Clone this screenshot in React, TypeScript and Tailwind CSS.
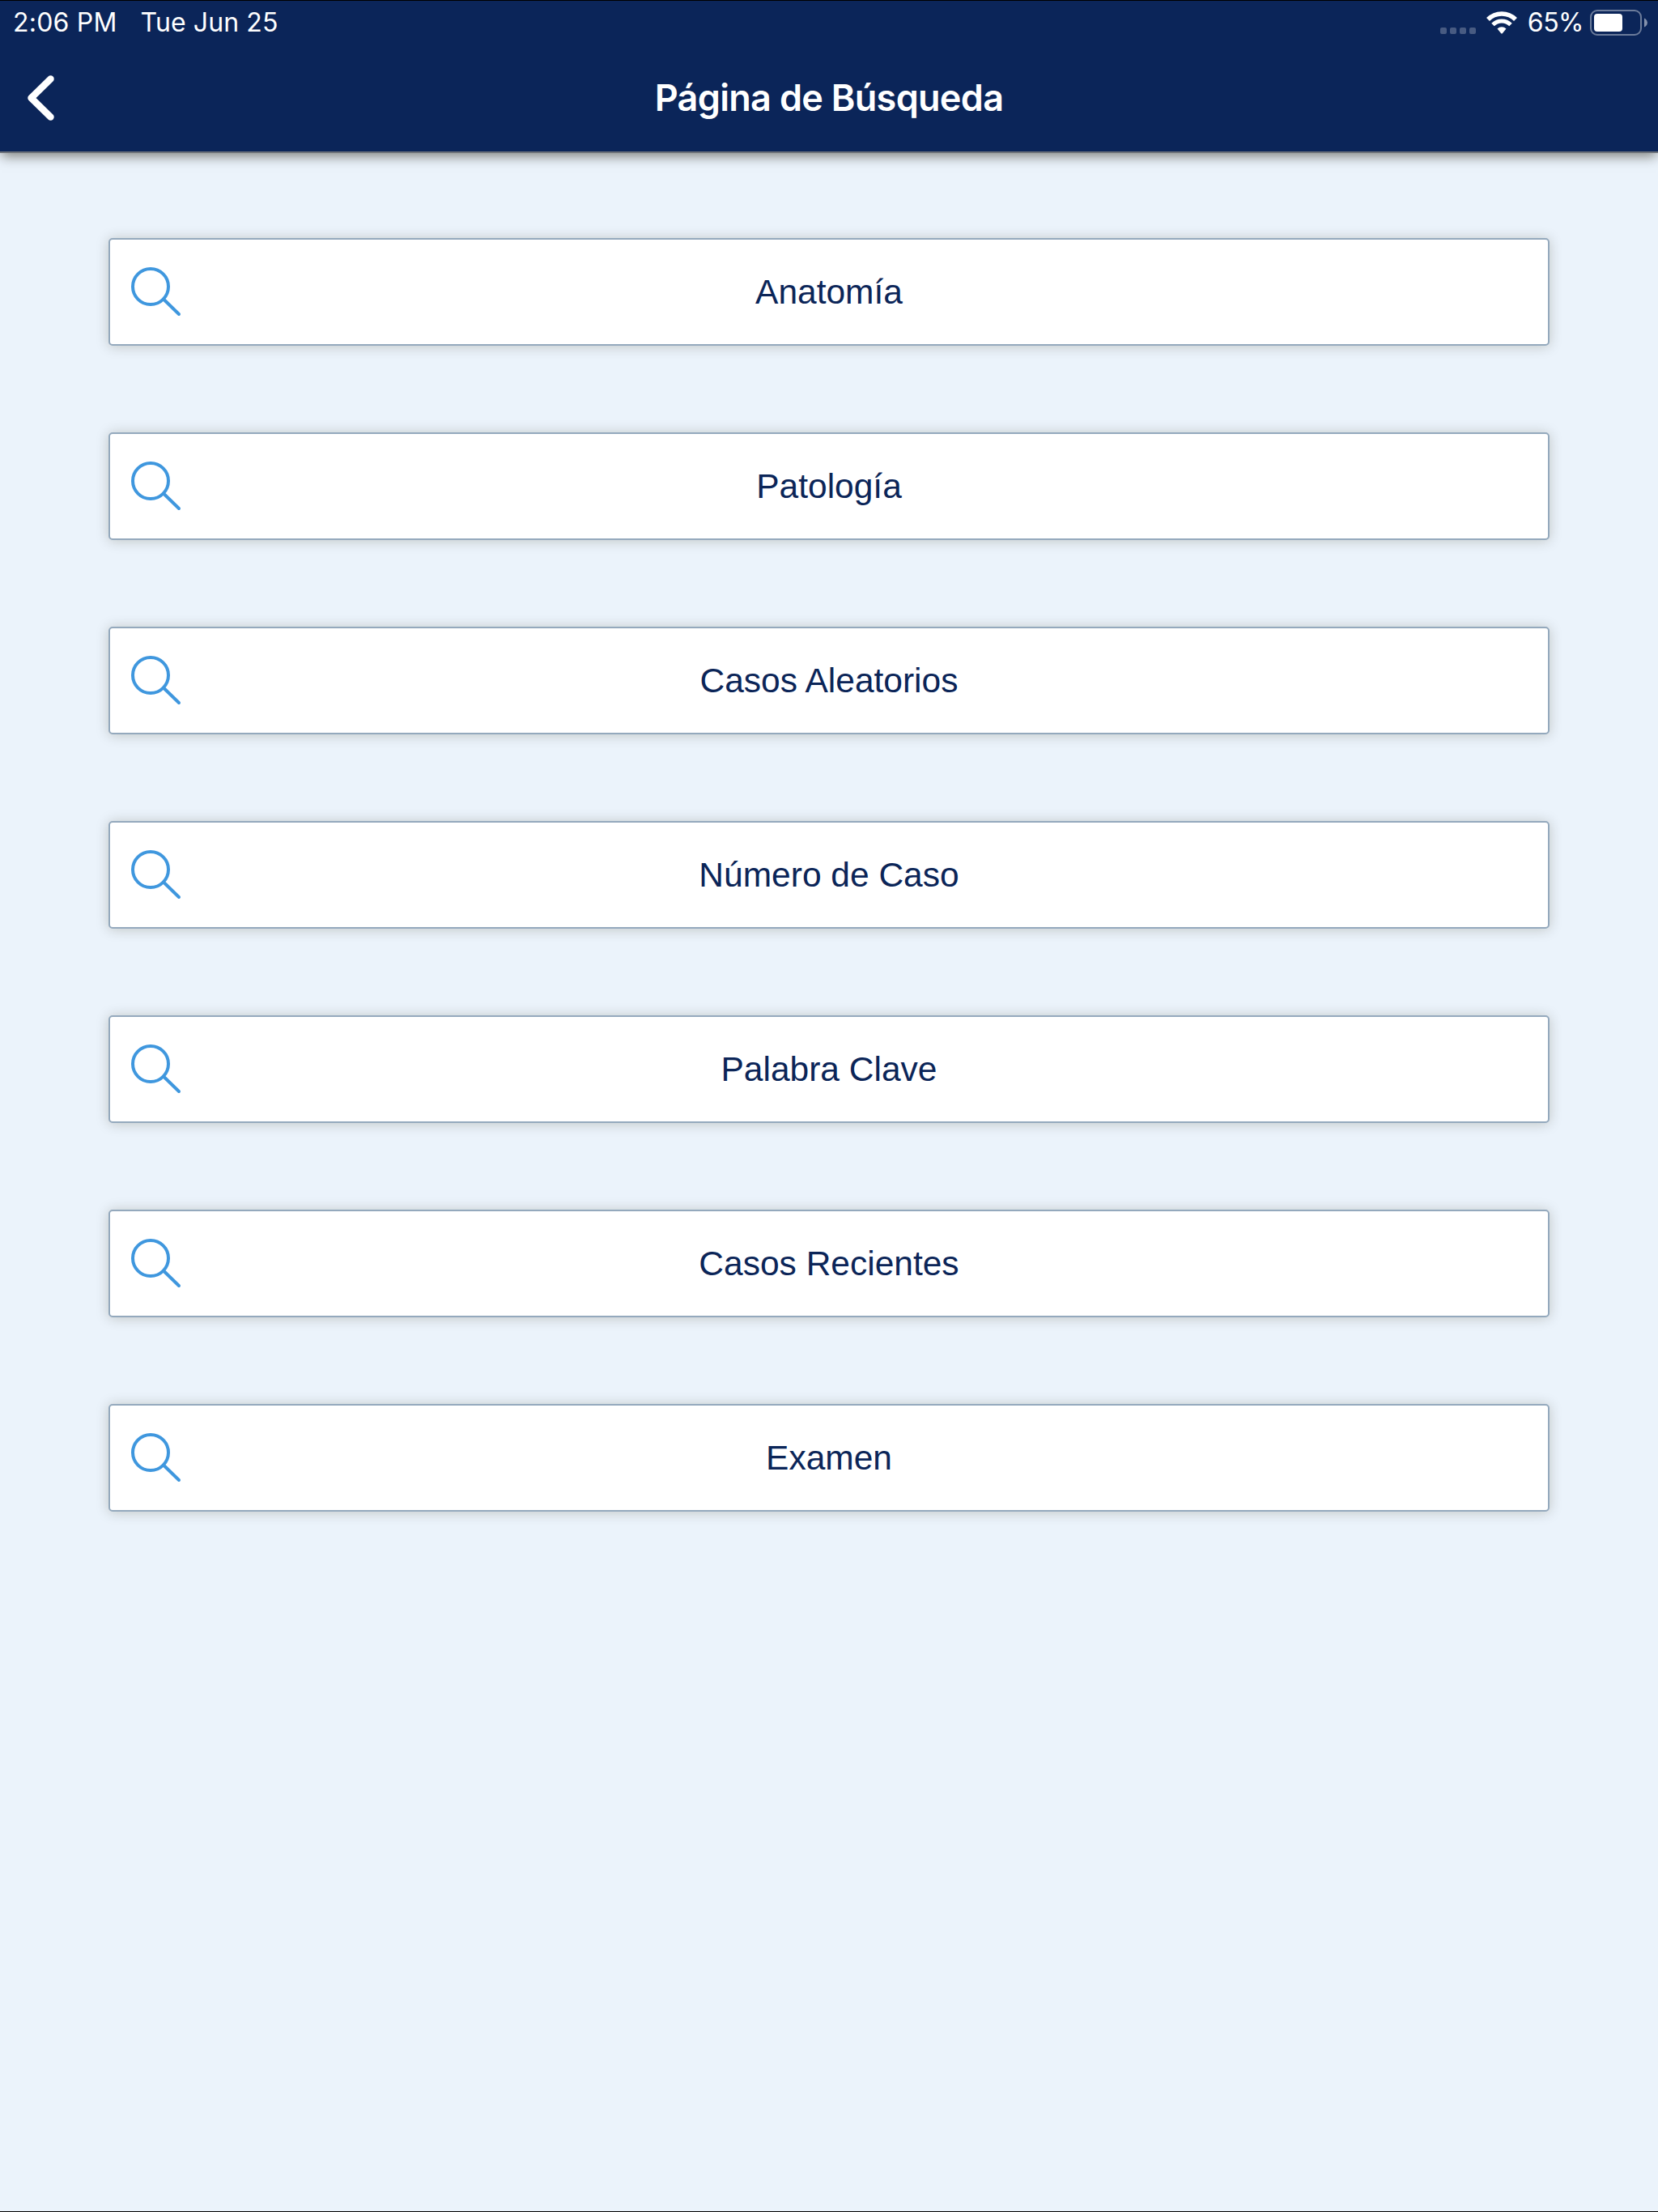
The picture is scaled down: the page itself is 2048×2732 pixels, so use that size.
const searchOptions = [
  "Anatomía",
  "Patología",
  "Casos Aleatorios",
  "Número de Caso",
  "Palabra Clave",
  "Casos Recientes",
  "Examen",
];

function StatusBar() {
  return (
    <div className="flex h-[53px] items-center justify-between pl-[16px] pr-[13px] font-['Inter'] text-[32px] leading-[53px] text-white">
      <div className="flex gap-[29px]">
        <span className="tracking-[0.2px]">2:06 PM</span>
        <span className="tracking-[0.1px]">Tue Jun 25</span>
      </div>
      <div className="flex items-center">
        <div className="mr-[13px] mt-[20px] flex gap-1">
          {[0, 1, 2, 3].map((i) => (
            <span key={i} className="size-2 rounded-[2px] bg-white/25" />
          ))}
        </div>
        <svg className="mr-[13px] h-[28px] w-[38px]" viewBox="0 0 38 28" fill="none">
          <path d="M2 10 A24 24 0 0 1 36 10" stroke="white" strokeWidth="5.5" />
          <path d="M8 16.5 A15.5 15.5 0 0 1 30 16.5" stroke="white" strokeWidth="5" />
          <path d="M13.5 21.5 A8 8 0 0 1 24.5 21.5 L20 27 Q19 28 18 27 Z" fill="white" />
        </svg>
        <span className="tracking-[-0.5px]">65%</span>
        <svg className="ml-[8px] mt-px h-[32px] w-[71px]" viewBox="0 0 71 32" fill="none">
          <rect x="1" y="1" width="62" height="30" rx="8" stroke="white" strokeOpacity="0.4" strokeWidth="2" />
          <rect x="5" y="5" width="35" height="22" rx="4" fill="white" />
          <path d="M67 10.5 Q71 12.5 71 16 Q71 19.5 67 21.5 Z" fill="white" fillOpacity="0.5" />
        </svg>
      </div>
    </div>
  );
}

function SearchOption({ label }: { label: string }) {
  return (
    <button className="relative flex h-[133px] w-full items-center justify-center rounded-[5px] border-2 border-[#94a9bd] bg-white shadow-[0_1px_16px_rgba(40,35,10,0.22)]">
      <svg
        className="absolute left-[26px] top-[34px] size-[64px]"
        viewBox="0 0 64 64"
        fill="none"
        stroke="#3f97de"
        strokeWidth="4"
        strokeLinecap="round"
      >
        <circle cx="24" cy="24" r="22" />
        <path d="M40 39.5 L59 58" />
      </svg>
      <span className="pt-px font-['Liberation_Sans'] text-[42.5px] leading-none text-[#0b2558]">{label}</span>
    </button>
  );
}

export default function App() {
  return (
    <div className="flex h-[2732px] w-[2048px] flex-col overflow-hidden border-y border-black bg-[#ebf3fb]">
      <header className="h-[188px] shrink-0 border-b-2 border-[#6b7078] bg-[#0b2559] shadow-[0_6px_14px_-2px_rgba(20,15,0,0.5)]">
        <StatusBar />
        <div className="relative flex h-[132px] items-center justify-center">
          <button className="absolute left-[32px] top-[38px]">
            <svg className="h-[58px] w-[36px]" viewBox="0 0 36 58" fill="none">
              <path d="M30.5 5.5 L6.5 29 L30.5 52.5" stroke="white" strokeWidth="8.5" strokeLinecap="round" strokeLinejoin="round" />
            </svg>
          </button>
          <h1 className="font-['Inter'] text-[45px] font-semibold leading-none tracking-[-0.7px] text-white">
            Página de Búsqueda
          </h1>
        </div>
      </header>
      <main className="flex flex-col gap-[107px] px-[134px] pt-[105px]">
        {searchOptions.map((label) => (
          <SearchOption key={label} label={label} />
        ))}
      </main>
    </div>
  );
}
